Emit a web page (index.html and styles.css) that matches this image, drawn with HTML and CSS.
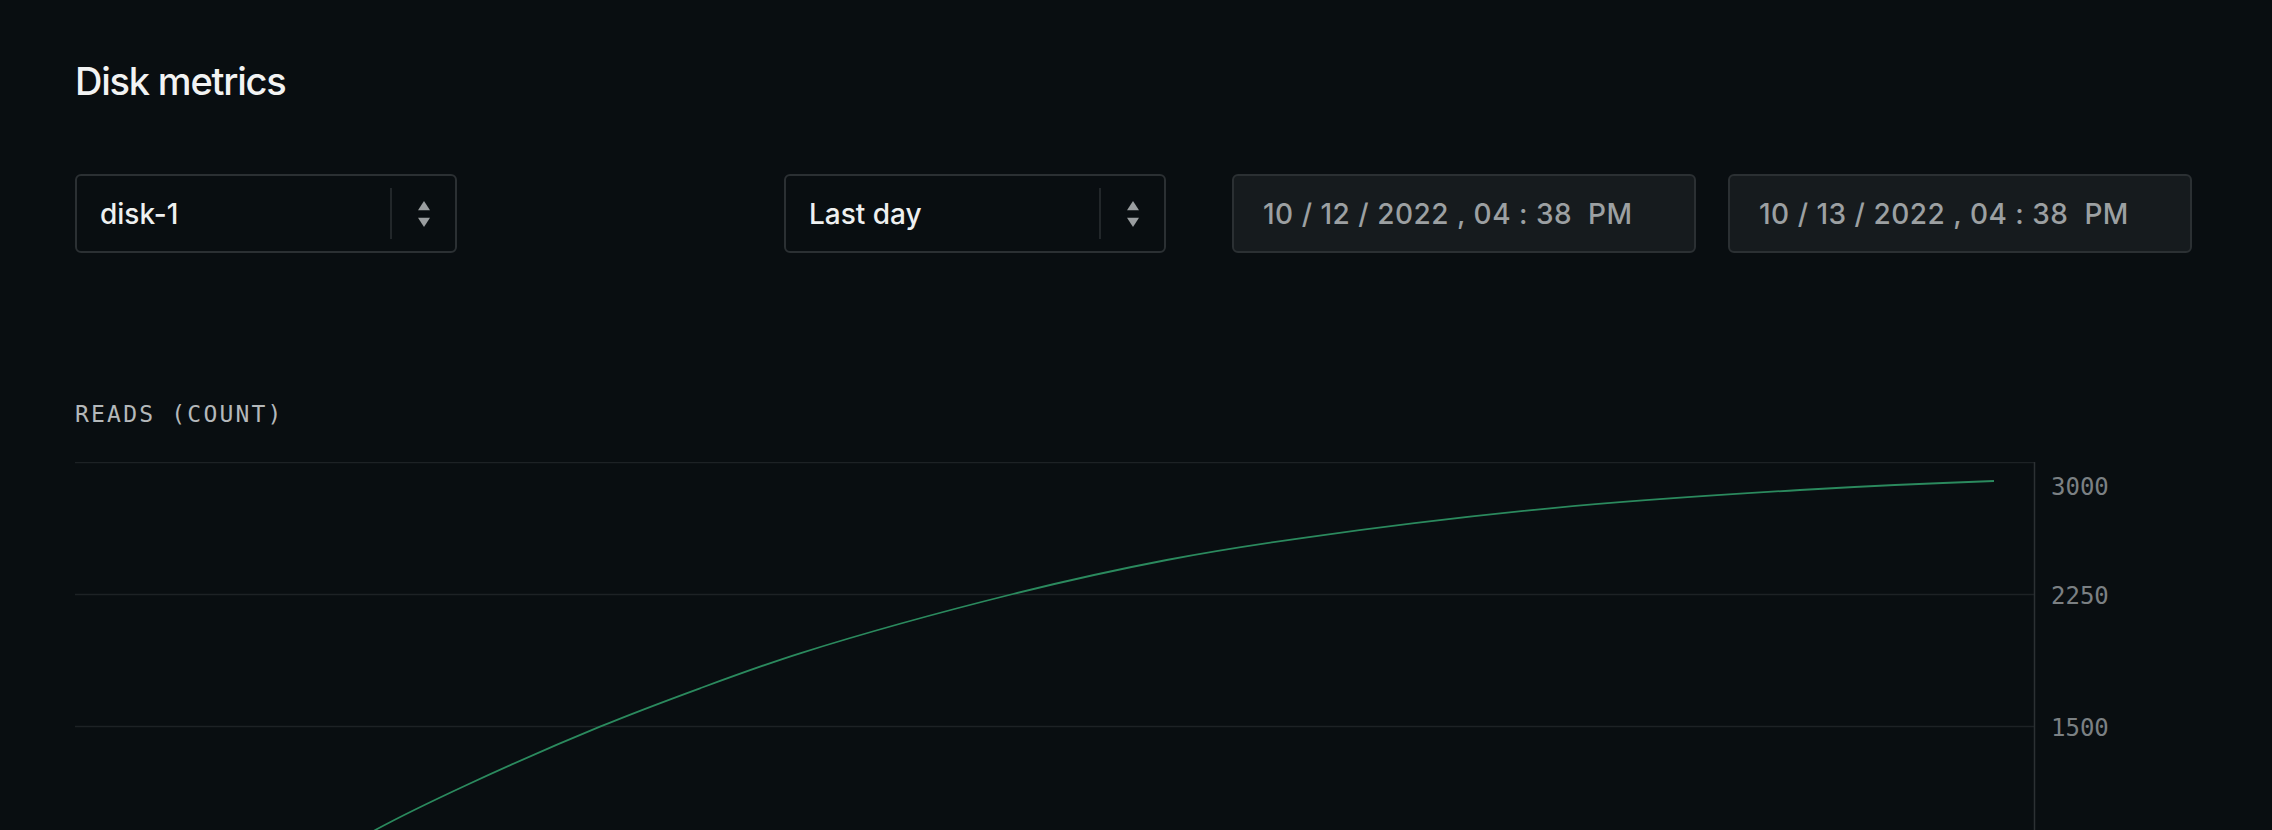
FILE: index.html
```html
<!DOCTYPE html>
<html lang="en">
<head>
<meta charset="utf-8">
<title>Disk metrics</title>
<link rel="stylesheet" href="styles.css">
</head>
<body>
<main class="page">
  <h1 class="title">Disk metrics</h1>

  <div class="controls">
    <div class="select">
      <span class="select-value">disk-1</span>
      <span class="select-divider"></span>
      <span class="select-arrows">
        <svg width="12" height="26" viewBox="0 0 12 26"><polygon points="6,0 12,9.3 0,9.3"/><polygon points="0,16.7 12,16.7 6,26"/></svg>
      </span>
    </div>

    <div class="range-group">
      <div class="select">
        <span class="select-value">Last day</span>
        <span class="select-divider"></span>
        <span class="select-arrows">
          <svg width="12" height="26" viewBox="0 0 12 26"><polygon points="6,0 12,9.3 0,9.3"/><polygon points="0,16.7 12,16.7 6,26"/></svg>
        </span>
      </div>
      <div class="date-field date-start">
        <span class="date-text">10 / 12 / 2022 , 04 : 38  PM</span>
      </div>
      <div class="date-field">
        <span class="date-text">10 / 13 / 2022 , 04 : 38  PM</span>
      </div>
    </div>
  </div>

  <section class="chart">
    <div class="chart-label">READS (COUNT)</div>
    <svg class="chart-svg" width="2117" height="528" viewBox="0 0 2117 528">
      <g class="grid">
        <line x1="0" y1="0.5" x2="1959" y2="0.5"/>
        <line x1="0" y1="132.5" x2="1959" y2="132.5"/>
        <line x1="0" y1="264.5" x2="1959" y2="264.5"/>
        <line x1="0" y1="396.5" x2="1959" y2="396.5"/>
      </g>
      <line class="axis" x1="1959.5" y1="0" x2="1959.5" y2="528"/>
      <g class="ticks">
        <text x="1976" y="33">3000</text>
        <text x="1976" y="141.5">2250</text>
        <text x="1976" y="274">1500</text>
      </g>
      <path class="series" d="M150,458 C200.57,425.13 251.13,394.86 301.7,367.3 C331.7,350.95 361.7,336.94 391.7,323 C436.13,302.36 480.57,282.94 525,264.7 C558.33,251.02 591.67,238.53 625,226.3 C658.33,214.07 691.67,201.77 725,191.3 C796,169.01 867,149.71 938,132 C989.23,119.22 1040.47,107.84 1091.7,98 C1136.13,89.47 1180.57,82.59 1225,76.3 C1308.33,64.51 1391.67,54.34 1475,46.3 C1558.33,38.26 1641.67,32.96 1725,28 C1789.67,24.15 1854.33,21.26 1919,19"/>
    </svg>
  </section>
</main>
</body>
</html>
```

FILE: styles.css
```css
* { box-sizing: border-box; }

html, body {
  margin: 0;
  background: #090e11;
}

body {
  font-family: Inter, "Noto Sans", "Liberation Sans", sans-serif;
  color: #eef0f0;
  overflow: hidden;
}

.page {
  padding: 58px 80px 0 75px;
}

.title {
  margin: 0;
  font-size: 38px;
  line-height: 46px;
  font-weight: 500;
  letter-spacing: -1.2px;
  color: #f2f3f3;
}

.controls {
  margin-top: 70px;
  display: flex;
  justify-content: space-between;
  align-items: center;
}

.range-group {
  display: flex;
  align-items: center;
}

.select {
  width: 382px;
  height: 79px;
  display: flex;
  align-items: center;
  border: 2px solid #2b3033;
  border-radius: 6px;
  background: #090e11;
}

.select-value {
  flex: 1;
  padding-left: 23px;
  font-size: 28px;
  font-weight: 500;
  color: #eef0f0;
}

.select-divider {
  width: 2px;
  height: 51px;
  background: #22272a;
}

.select-arrows {
  width: 63px;
  display: flex;
  justify-content: center;
  align-items: center;
}

.select-arrows svg {
  display: block;
  fill: #9a9ea0;
}

.date-field {
  width: 464px;
  height: 79px;
  display: flex;
  align-items: center;
  padding-left: 29px;
  border: 2px solid #2b3033;
  border-radius: 6px;
  background: #161b1e;
}

.date-start {
  margin-left: 66px;
  margin-right: 32px;
}

.date-text {
  font-size: 28px;
  font-weight: 500;
  letter-spacing: 0.5px;
  color: #9ca0a2;
  white-space: pre;
}

.chart {
  margin-top: 147px;
}

.chart-label {
  font-family: "DejaVu Sans Mono", "Liberation Mono", monospace;
  font-size: 23px;
  line-height: 28px;
  letter-spacing: 2.2px;
  color: #b4b8ba;
}

.chart-svg {
  display: block;
  margin-top: 34px;
}

.grid line {
  stroke: #1d2225;
  stroke-width: 1.5;
}

.axis {
  stroke: #2c3134;
  stroke-width: 1.5;
}

.ticks text {
  font-family: "DejaVu Sans Mono", "Liberation Mono", monospace;
  font-size: 24px;
  fill: #7b8083;
}

.series {
  fill: none;
  stroke: #2b8a5e;
  stroke-width: 1.8;
}
```
